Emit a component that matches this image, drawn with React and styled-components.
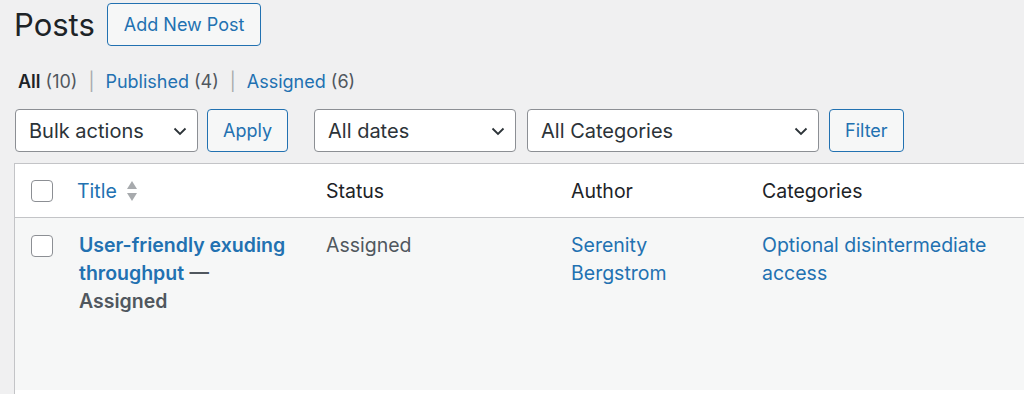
import React from 'react'
import styled, { createGlobalStyle } from 'styled-components'

const GlobalStyle = createGlobalStyle`
  html, body {
    margin: 0;
    padding: 0;
    background: #f0f0f1;
    overflow: hidden;
  }
  body {
    font-family: Inter, "Noto Sans", "Liberation Sans", sans-serif;
    font-size: 18px;
    color: #1d2327;
  }
`

const Wrap = styled.div`
  padding: 3px 0 0 14px;
  height: 394px;
  box-sizing: border-box;
`

const Heading = styled.div`
  display: flex;
  align-items: center;
  gap: 12px;
  height: 43px;
`

const Title = styled.h1`
  margin: 0;
  font-size: 31px;
  font-weight: 400;
  line-height: 43px;
  color: #1d2327;
`

const OutlineButton = styled.button`
  box-sizing: border-box;
  height: 43px;
  padding: 0 ${p => p.$pad || 16}px;
  margin-left: ${p => p.$left || 0}px;
  border: 1px solid #2271b1;
  border-radius: 4px;
  background: #f6f7f7;
  color: #2271b1;
  font: inherit;
  font-size: 18px;
  cursor: pointer;
`

const Views = styled.ul`
  list-style: none;
  margin: 22px 0 0 4px;
  padding: 0;
  display: flex;
  line-height: 28px;
  color: #50575e;
`

const View = styled.li`
  & + &::before {
    content: '|';
    color: #a7aaad;
    margin: 0 11px 0 11px;
  }
`

const ViewLink = styled.a`
  color: ${p => (p.$current ? '#1d2327' : '#2271b1')};
  font-weight: ${p => (p.$current ? 600 : 400)};
  text-decoration: none;
`

const TableNav = styled.div`
  display: flex;
  align-items: center;
  margin: 13px 0 0 1px;
  height: 43px;
`

const Group = styled.div`
  display: flex;
  gap: ${p => p.$gap || 9}px;
  margin-right: ${p => p.$after || 0}px;
`

const SelectBox = styled.div`
  box-sizing: border-box;
  width: ${p => p.$w}px;
  height: 43px;
  display: flex;
  align-items: center;
  justify-content: space-between;
  padding: 0 9px 0 13px;
  background: #fff;
  border: 1px solid #8c8f94;
  border-radius: 4px;
  color: #2c3338;
  font-size: 20px;
`

const Chevron = () => (
  <svg width="16" height="16" viewBox="0 0 16 16" fill="none">
    <path d="M2.5 5.5 8 11l5.5-5.5" stroke="#2c3338" strokeWidth="1.8" />
  </svg>
)

const Table = styled.div`
  margin-top: 11px;
  width: 1040px;
  border: 1px solid #c3c4c7;
  border-right: none;
  background: #fff;
  height: 240px;
  font-size: 19.5px;
`

const Row = styled.div`
  display: grid;
  grid-template-columns: 62px 249px 245px 191px 1fr;
  background: ${p => (p.$head ? '#fff' : '#f6f7f7')};
  border-bottom: ${p => (p.$head ? '1px solid #c3c4c7' : 'none')};
  height: ${p => (p.$head ? 54 : 172)}px;
  box-sizing: border-box;
  align-items: ${p => (p.$head ? 'center' : 'start')};
`

const Cell = styled.div`
  line-height: 28px;
  padding-top: ${p => (p.$head ? 0 : 13)}px;
  color: ${p => p.$color || '#1d2327'};
  max-width: ${p => p.$max || 'none'};
  padding-left: ${p => p.$indent || 0}px;
`

const CheckCell = styled.div`
  padding: ${p => (p.$head ? '0' : '17px')} 0 0 16px;
`

const Checkbox = styled.span`
  display: block;
  width: 22px;
  height: 22px;
  box-sizing: border-box;
  border: 1px solid #8c8f94;
  border-radius: 4px;
  background: #fff;
`

const SortLink = styled.a`
  display: inline-flex;
  align-items: center;
  gap: 9px;
  color: #2271b1;
  text-decoration: none;
`

const Link = styled.a`
  color: #2271b1;
  text-decoration: none;
  font-weight: ${p => (p.$strong ? 600 : 400)};
`

const State = styled.span`
  color: #50575e;
  font-weight: 600;
`

const SortIcon = () => (
  <svg width="12" height="22" viewBox="0 0 12 22">
    <path d="M6 1 11 9H1z" fill="#a7aaad" />
    <path d="M6 21 11 13H1z" fill="#a7aaad" />
  </svg>
)

const App = () => (
  <Wrap>
    <GlobalStyle />
    <Heading>
      <Title>Posts</Title>
      <OutlineButton $pad={16}>Add New Post</OutlineButton>
    </Heading>
    <Views>
      <View><ViewLink $current>All</ViewLink> (10)</View>
      <View><ViewLink>Published</ViewLink> (4)</View>
      <View><ViewLink>Assigned</ViewLink> (6)</View>
    </Views>
    <TableNav>
      <Group $after={26}>
        <SelectBox $w={183}>Bulk actions <Chevron /></SelectBox>
        <OutlineButton $pad={15}>Apply</OutlineButton>
      </Group>
      <Group $gap={11}>
        <SelectBox $w={202}>All dates <Chevron /></SelectBox>
        <SelectBox $w={292}>All Categories <Chevron /></SelectBox>
      </Group>
      <OutlineButton $pad={15} $left={10}>Filter</OutlineButton>
    </TableNav>
    <Table>
      <Row $head>
        <CheckCell $head><Checkbox /></CheckCell>
        <Cell $head><SortLink>Title <SortIcon /></SortLink></Cell>
        <Cell $head>Status</Cell>
        <Cell $head>Author</Cell>
        <Cell $head>Categories</Cell>
      </Row>
      <Row>
        <CheckCell><Checkbox /></CheckCell>
        <Cell $max="212px" $indent={2}>
          <Link $strong>User-friendly exuding throughput</Link> <State>— Assigned</State>
        </Cell>
        <Cell $color="#50575e">Assigned</Cell>
        <Cell $max="150px"><Link>Serenity Bergstrom</Link></Cell>
        <Cell $max="240px"><Link>Optional disintermediate access</Link></Cell>
      </Row>
    </Table>
  </Wrap>
)

export default App
